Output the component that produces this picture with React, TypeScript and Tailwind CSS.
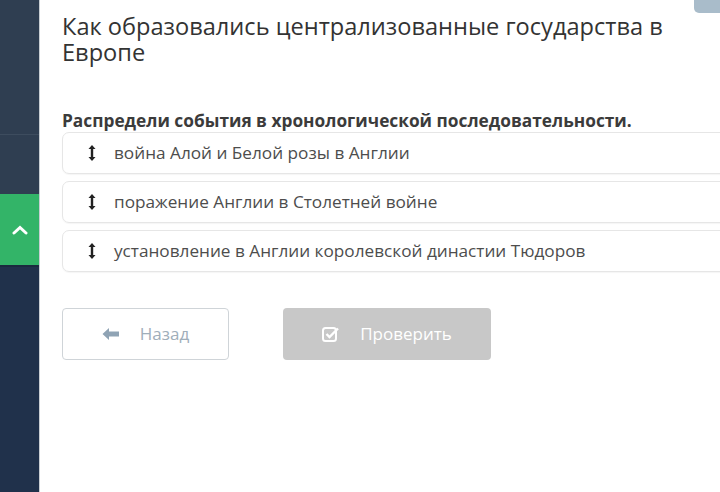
import React from "react";

const items = [
  "война Алой и Белой розы в Англии",
  "поражение Англии в Столетней войне",
  "установление в Англии королевской династии Тюдоров",
];

function SortIcon() {
  return (
    <svg width="8" height="18" viewBox="0 0 8 18" className="shrink-0">
      <path d="M4 1 L7.5 5 H5.2 V13 H7.5 L4 17 L0.5 13 H2.8 V5 H0.5 Z" fill="#222" />
    </svg>
  );
}

export default function App() {
  return (
    <div className="flex h-[492px] w-[720px] overflow-hidden bg-white" style={{ fontFamily: "'Open Sans', sans-serif" }}>
      <div className="flex w-[40px] shrink-0 flex-col border-r border-[#c9ced3]">
        <div className="h-[135px] border-b border-[#3d4c5e] bg-[#2f3e51]" />
        <div className="h-[59px] bg-[#2f3e51]" />
        <div className="flex h-[71px] items-center justify-center bg-[#33b468]">
          <svg width="16" height="12" viewBox="0 0 16 12">
            <path d="M2 9 L8 3.5 L14 9" stroke="#fff" strokeWidth="3" fill="none" strokeLinecap="round" />
          </svg>
        </div>
        <div className="flex-1 border-t-2 border-[#1a2a3f] bg-[#20314b]" />
      </div>

      <div className="relative flex-1 pl-[22px]">
        <div className="absolute right-0 top-0 h-[13px] w-[26px] rounded-bl-[5px] bg-[#a9bcca]" />
        <h1 className="w-[640px] pt-[13px] text-[23.6px] leading-[26px] text-[#333]">
          Как образовались централизованные государства в Европе
        </h1>
        <p className="mt-[46px] whitespace-nowrap text-[17.3px] font-bold leading-[20px] text-[#3b3b3b]">
          Распредели события в хронологической последовательности.
        </p>
        <div className="mt-[1px] flex flex-col gap-[7px]">
          {items.map((t) => (
            <div
              key={t}
              className="-mr-[10px] flex h-[42px] items-center rounded-[7px] border border-[#e6e6e6] pl-[25px] shadow-[0_1px_1px_rgba(0,0,0,0.04)]"
            >
              <SortIcon />
              <span className="ml-[18px] text-[17.2px] text-[#4d4d4d]">{t}</span>
            </div>
          ))}
        </div>
        <div className="mt-[36px] flex gap-[54px]">
          <button className="flex h-[52px] w-[167px] items-center justify-center gap-[20px] rounded-[4px] border border-[#cfd4d8] bg-white text-[17px] text-[#a0aeba]">
            <svg width="18" height="14" viewBox="0 0 18 14">
              <path d="M0.5 7 L7 1 V4.5 H17 V9.5 H7 V13 Z" fill="#8fa3b4" />
            </svg>
            Назад
          </button>
          <button className="flex h-[52px] w-[208px] items-center justify-center gap-[20px] rounded-[4px] bg-[#c8c8c8] text-[17px] text-white">
            <svg width="18" height="16" viewBox="0 0 18 16">
              <rect x="1" y="2" width="13" height="13" rx="2.5" fill="none" stroke="#fff" strokeWidth="2" />
              <path d="M4.5 8 L7.5 11 L16 2.5" stroke="#fff" strokeWidth="2.4" fill="none" />
            </svg>
            Проверить
          </button>
        </div>
      </div>
    </div>
  );
}
